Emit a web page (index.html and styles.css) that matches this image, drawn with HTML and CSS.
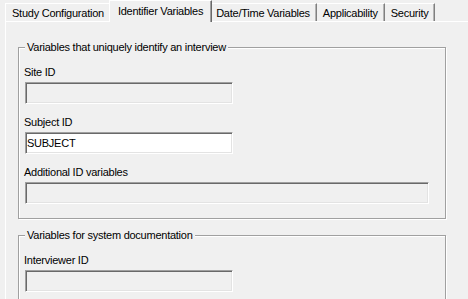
FILE: index.html
```html
<!DOCTYPE html>
<html>
<head>
<meta charset="utf-8">
<link rel="stylesheet" href="styles.css">
</head>
<body>
<div class="dialog">
  <div class="tabs">
    <div class="tab first">Study Configuration</div>
    <div class="tab selected">Identifier Variables</div>
    <div class="tab">Date/Time Variables</div>
    <div class="tab">Applicability</div>
    <div class="tab">Security</div>
  </div>
  <div class="panel">
    <fieldset class="group">
      <legend>Variables that uniquely identify an interview</legend>
      <div class="fields">
        <div class="field">
          <label class="label">Site ID</label>
          <input class="box short" disabled>
        </div>
        <div class="field">
          <label class="label">Subject ID</label>
          <input class="box short active" value="SUBJECT">
        </div>
        <div class="field">
          <label class="label">Additional ID variables</label>
          <input class="box long" disabled>
        </div>
      </div>
    </fieldset>
    <fieldset class="group second">
      <legend>Variables for system documentation</legend>
      <div class="fields">
        <div class="field">
          <label class="label">Interviewer ID</label>
          <input class="box short" disabled>
        </div>
      </div>
    </fieldset>
  </div>
</div>
</body>
</html>
```
FILE: styles.css
```css
html, body {
  margin: 0;
  height: 100%;
  overflow: hidden;
  background: #f0f0f0;
  font-family: "Liberation Sans", Arial, sans-serif;
  font-size: 11px;
  letter-spacing: -0.25px;
  color: #000;
}

.dialog {
  height: 100%;
  display: flex;
  flex-direction: column;
}

.tabs {
  display: flex;
  align-items: flex-end;
  height: 22px;
  padding-left: 5px;
}

.tab {
  box-sizing: border-box;
  height: 18px;
  padding: 3px 6px 0;
  line-height: 13px;
  border-top: 1px solid #fff;
  border-right: 1px solid #808080;
  box-shadow: inset -1px 0 #b4b4b4;
  white-space: nowrap;
}

.tab.first {
  border-left: 1px solid #fff;
}

.tab.selected {
  position: relative;
  z-index: 1;
  height: 22px;
  margin: 0 -2px -1px;
  padding: 4px 8px 0;
  background: #f0f0f0;
  border-left: 1px solid #fff;
  border-right: 1px solid #696969;
  box-shadow: inset -1px 0 #a0a0a0;
}

.panel {
  flex: 1;
  margin-left: 5px;
  padding-left: 12px;
  border-top: 1px solid #fff;
  border-left: 1px solid #fff;
}

.group {
  box-sizing: border-box;
  width: 428px;
  margin: 19px 0 0;
  padding: 0 0 14px 6px;
  border: 1px solid #a0a0a0;
  box-shadow: inset 1px 1px #fff, 1px 1px #fff;
  min-width: 0;
}

.group.second {
  margin-top: 10px;
}

.group legend {
  padding: 0 2px;
  line-height: 13px;
  background: #f0f0f0;
}

.fields {
  display: flex;
  flex-direction: column;
  gap: 12px;
  padding-top: 12px;
}

.field {
  display: flex;
  flex-direction: column;
  align-items: flex-start;
  gap: 3px;
}

.label {
  line-height: 13px;
  margin-left: -1px;
}

.box {
  box-sizing: border-box;
  height: 22px;
  margin: 0;
  padding: 0 0 0 1px;
  font: inherit;
  letter-spacing: inherit;
  color: #000;
  background: #f0f0f0;
  border: 1px solid;
  border-color: #a0a0a0 #fff #fff #a0a0a0;
  box-shadow: inset 1px 1px #696969, inset -1px -1px #e3e3e3;
  outline: none;
}

.box.active {
  background: #fff;
}

.box.short {
  width: 208px;
}

.box.long {
  width: 404px;
}
```
